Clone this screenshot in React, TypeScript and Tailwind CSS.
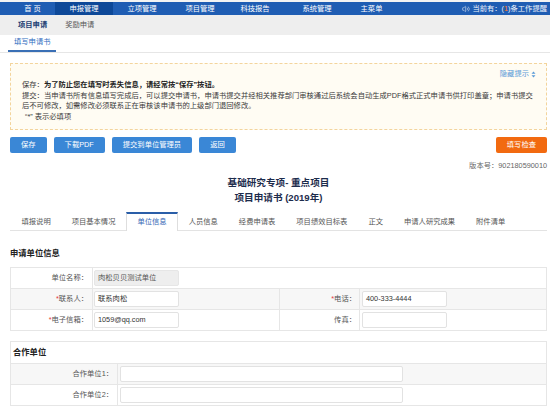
import React from "react";
import { Volume2 } from "lucide-react";

function Field({ value, className }: { value?: string; className: string }) {
  return (
    <div className={"h-[16px] rounded-[2px] border flex items-center pl-[3px] text-[#333] " + className}>
      {value}
    </div>
  );
}

function Req() {
  return <span className="text-[#e4393c]">*</span>;
}

export default function App() {
  const tabs = ["填报说明", "项目基本情况", "单位信息", "人员信息", "经费申请表", "项目绩效目标表", "正文", "申请人研究成果", "附件清单"];
  return (
    <div className="w-[550px] h-[406px] overflow-hidden bg-white font-['Liberation_Sans','Noto_Sans_CJK_SC',sans-serif] text-[7.3px] text-[#333]">
      <div className="h-[2px] bg-[#f3f3f3]" />
      <div className="h-[13px] bg-[#1f5db3] flex text-white leading-[13px]">
        <div className="ml-[10px] w-[45px] text-center">首 页</div>
        <div className="w-[58px] text-center bg-[#0d4898]">申报管理</div>
        <div className="w-[58px] text-center">立项管理</div>
        <div className="w-[58px] text-center">项目管理</div>
        <div className="w-[52px] text-center">科技报告</div>
        <div className="w-[72px] text-center">系统管理</div>
        <div className="w-[37px] text-center">主菜单</div>
        <div className="ml-auto mr-[3px] flex items-center gap-[2px] text-[#eef3fb]">
          <Volume2 size={8} strokeWidth={2} className="text-[#c9d6ea]" />
          <span>
            当前有：(<span className="text-[#ff7b1c]">1</span>)条工作提醒
          </span>
        </div>
      </div>
      <div className="h-[20px] bg-[#eeeeee] flex items-center pl-[18px] gap-[18px]">
        <span className="text-[#1d3f74] font-bold">项目申请</span>
        <span className="text-[#555]">奖励申请</span>
      </div>
      <div className="h-[17px] pl-[8px] flex">
        <div className="h-full px-[6px] border-b-2 border-[#3a6fb5] text-[#2e6cc0] flex items-center">填写申请书</div>
      </div>
      <div className="h-px bg-[#e6e6e6]" />

      <div className="pl-[10px] pr-[3px]">
        <div className="mt-[10px] h-[67px] border border-dashed border-[#f3d49c] bg-[#fffcf3] pt-[5px] pl-[11px] pr-[10px]">
          <div className="h-[10px] flex items-center justify-end gap-[2px] text-[#5b9bd8]">
            隐藏提示
            <svg width="5" height="7" viewBox="0 0 5 7">
              <path d="M2.5 0.5 L4.5 2.8 L0.5 2.8 Z M2.5 6.5 L4.5 4.2 L0.5 4.2 Z" fill="#5b9bd8" />
            </svg>
          </div>
          <div className="mt-[1px] leading-[10.5px] text-[#3a3a3a] whitespace-nowrap">
            <div>
              保存：<span className="font-bold text-[#222]">为了防止您在填写时丢失信息，请经常按“保存”按钮。</span>
            </div>
            <div>提交：当申请书所有信息填写完成后，可以提交申请书，申请书提交并经相关推荐部门审核通过后系统会自动生成PDF格式正式申请书供打印盖章；申请书提交</div>
            <div>后不可修改，如需修改必须联系正在审核该申请书的上级部门退回修改。</div>
            <div className="pl-[3px]">“*” 表示必填项</div>
          </div>
        </div>

        <div className="mt-[7px] flex gap-[7px] text-white">
          <button className="h-[16px] px-[11px] rounded-[2px] bg-[#3a87d6] leading-[16px]">保存</button>
          <button className="h-[16px] px-[11px] rounded-[2px] bg-[#3a87d6] leading-[16px]">下载PDF</button>
          <button className="h-[16px] px-[11px] rounded-[2px] bg-[#3a87d6] leading-[16px]">提交到单位管理员</button>
          <button className="h-[16px] px-[11px] rounded-[2px] bg-[#3a87d6] leading-[16px]">返回</button>
          <button className="ml-auto h-[16px] px-[11px] rounded-[2px] bg-[#f26a10] leading-[16px]">填写检查</button>
        </div>

        <div className="mt-[8px] h-[10px] leading-[10px] text-right text-[#666]">版本号：902180590010</div>

        <div className="mt-[5px] text-center font-bold text-[9.6px] leading-[13px] text-[#1d2c4c]">基础研究专项- 重点项目</div>
        <div className="mt-[2px] text-center font-bold text-[9.6px] leading-[13px] text-[#1d2c4c]">项目申请书 (2019年)</div>

        <div className="mt-[8px] h-[19px] flex border-b border-[#e3e3e3] pl-[1px]">
          {tabs.map((t) =>
            t === "单位信息" ? (
              <div key={t} className="h-[19px] px-[10.5px] border-t-2 border-x border-t-[#2a5ea8] border-x-[#dedede] bg-white text-[#3568b5] flex items-center">
                {t}
              </div>
            ) : (
              <div key={t} className="h-[18px] px-[10.5px] text-[#555] flex items-center mt-[1px]">
                {t}
              </div>
            )
          )}
        </div>

        <div className="mt-[9px] h-[28px] flex items-center border-b border-[#e6e6e6] font-bold text-[8.3px] text-[#222]">申请单位信息</div>
        <div className="border-x border-[#e6e6e6]">
          <div className="h-[21px] flex border-b border-[#e6e6e6]">
            <div className="w-[82px] border-r border-[#e6e6e6] flex items-center justify-end pr-[4px] text-[#555]">单位名称：</div>
            <div className="flex-1 flex items-center pl-[1px]">
              <Field value="肉松贝贝测试单位" className="w-[85px] bg-[#eeeeee] border-[#e6e6e6] text-[#555]" />
            </div>
          </div>
          <div className="h-[21px] flex border-b border-[#e6e6e6] bg-[#f7f7f7]">
            <div className="w-[82px] border-r border-[#e6e6e6] flex items-center justify-end pr-[4px] text-[#555]"><Req />联系人：</div>
            <div className="w-[187px] border-r border-[#e6e6e6] flex items-center pl-[1px]">
              <Field value="联系肉松" className="w-[85px] bg-white border-[#e2e2e2]" />
            </div>
            <div className="w-[80px] border-r border-[#e6e6e6] flex items-center justify-end pr-[3px] text-[#555]"><Req />电话：</div>
            <div className="flex-1 flex items-center pl-[2px]">
              <Field value="400-333-4444" className="w-[85px] bg-white border-[#e2e2e2]" />
            </div>
          </div>
          <div className="h-[21px] flex border-b border-[#e6e6e6]">
            <div className="w-[82px] border-r border-[#e6e6e6] flex items-center justify-end pr-[4px] text-[#555]"><Req />电子信箱：</div>
            <div className="w-[187px] border-r border-[#e6e6e6] flex items-center pl-[1px]">
              <Field value="1059@qq.com" className="w-[85px] bg-white border-[#e2e2e2]" />
            </div>
            <div className="w-[80px] border-r border-[#e6e6e6] flex items-center justify-end pr-[3px] text-[#555]">传真：</div>
            <div className="flex-1 flex items-center pl-[2px]">
              <Field className="w-[85px] bg-white border-[#e2e2e2]" />
            </div>
          </div>
        </div>

        <div className="mt-[10px] border border-[#e6e6e6]">
          <div className="h-[22px] flex items-center pl-[2px] border-b border-[#e6e6e6] font-bold text-[8.3px] text-[#222]">合作单位</div>
          <div className="h-[21px] flex border-b border-[#e6e6e6] bg-[#f7f7f7]">
            <div className="w-[107px] border-r border-[#e6e6e6] flex items-center justify-end pr-[4px] text-[#555]">合作单位1：</div>
            <div className="flex-1 flex items-center pl-[2px]">
              <Field className="w-[283px] bg-white border-[#e2e2e2]" />
            </div>
          </div>
          <div className="h-[21px] flex border-b border-[#e6e6e6]">
            <div className="w-[107px] border-r border-[#e6e6e6] flex items-center justify-end pr-[4px] text-[#555]">合作单位2：</div>
            <div className="flex-1 flex items-center pl-[2px]">
              <Field className="w-[283px] bg-white border-[#e2e2e2]" />
            </div>
          </div>
        </div>
      </div>
    </div>
  );
}
